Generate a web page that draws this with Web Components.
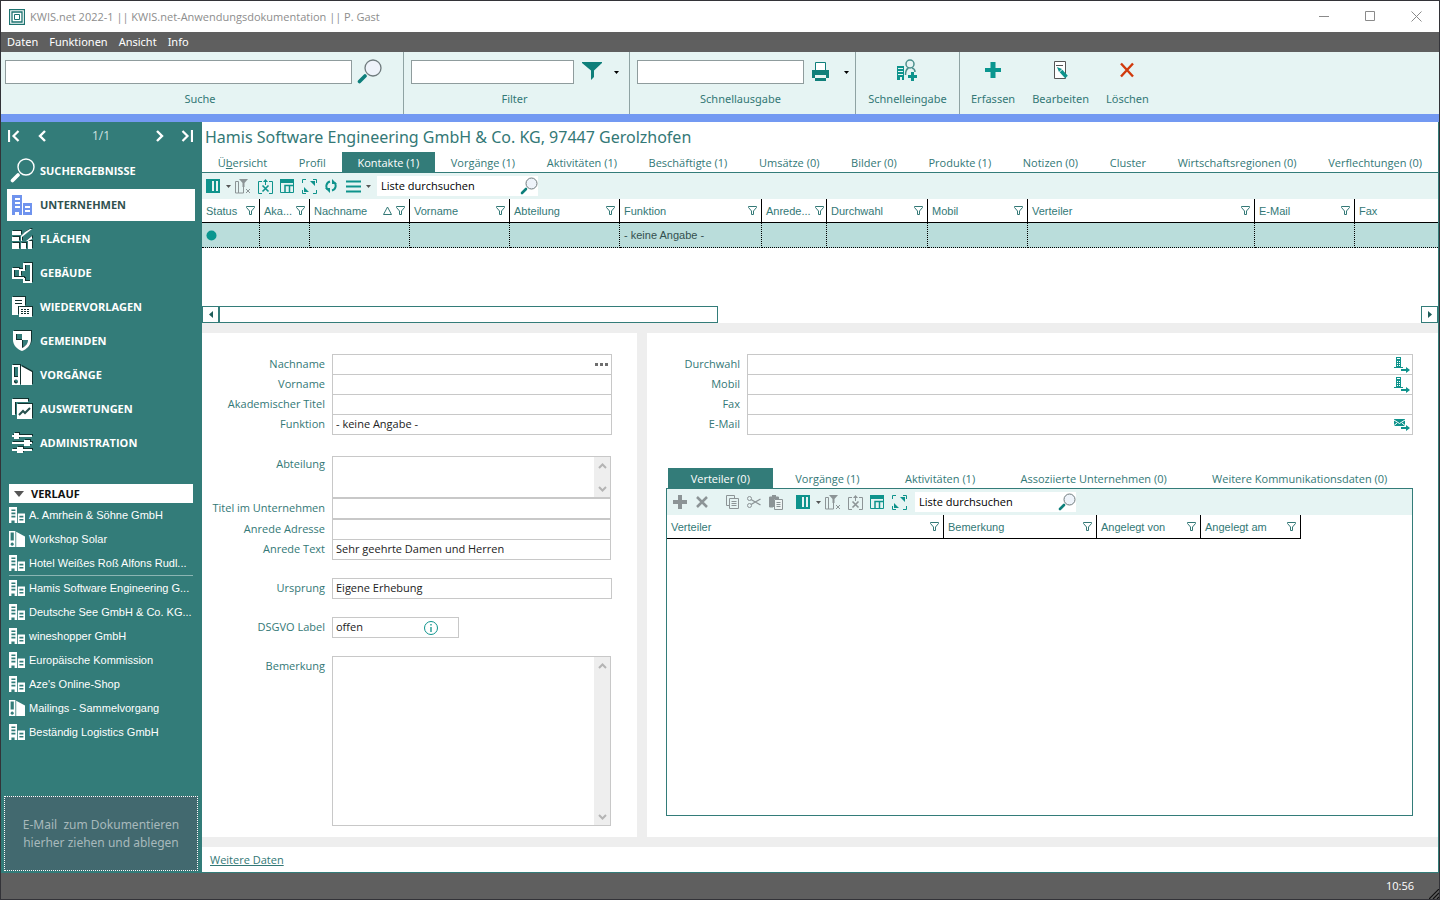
<!DOCTYPE html>
<html lang="de">
<head>
<meta charset="utf-8">
<title>KWIS.net 2022-1</title>
<style>
  html { --teal: #337c79; --ink: #337876; --icon: #0e938c; --mint: #e6f4f3; --grey: #5f5f5f; --line: #c8c8c8; --ui: "Open Sans", "Noto Sans", sans-serif; --wide: "Noto Sans", "Open Sans", sans-serif; --list: "Liberation Sans", Arial, sans-serif; }
  body { margin: 0; font: 11px/16px var(--ui); color: var(--ink); }
</style>
</head>
<body>
<kw-app></kw-app>
<script>
const BASE = `
  *, ::before, ::after { box-sizing: border-box; }
  button { font: inherit; color: inherit; background: none; border: 0; padding: 0; margin: 0; }
  input, textarea { font: inherit; color: #222; margin: 0; border: 0; outline: 0; background: none; min-width: 0; }
  a { color: inherit; text-decoration: none; }
  ul { list-style: none; margin: 0; padding: 0; }
`;
function define(name, css, html) {
  customElements.define(name, class extends HTMLElement {
    constructor() { super(); this.attachShadow({ mode: 'open' }); }
    connectedCallback() {
      const t = document.createElement('template');
      t.innerHTML = `<style>${BASE}${css}</style>` + (typeof html === 'function' ? html(this) : html);
      this.shadowRoot.replaceChildren(t.content.cloneNode(true));
    }
  });
}

/* Icon set: [width, height, markup] */
const BUILDING = '<path fill-rule="evenodd" fill="currentColor" d="M0 0h10v20H7v-3H3v3H0zM3 3v2h5V3zM3 7v2h5V7zM3 11v2h5v-2zM11 8h9v12h-9zM13 11v2h5v-2zM13 15v2h5v-2z"/>';
const BINDER = '<path fill-rule="evenodd" fill="currentColor" d="M0 0h8v20H0zM2 2v10h4V2zM4 14.500a2 2 0 1 0 .01 0zM9 1l11 6v13H9z"/>';
const ICONS = {
  logo: [16, 16, '<g fill="none" stroke="#1d7370"><path d="M.5 .5h15v15H.5zM3 3h10v10H3z" stroke-width="1.300"/><path d="M5.500 5.500h5v5h-5z"/></g>'],
  min: [11, 11, '<path d="M0 5.500h10" stroke="#8a8a8a"/>'],
  max: [11, 11, '<path d="M.5 .5h9v9h-9z" stroke="#8a8a8a" fill="none"/>'],
  close: [11, 11, '<path d="M.5 .5l10 10M10.500 .5l-10 10" stroke="#8a8a8a" fill="none"/>'],
  lens: [26, 26, '<circle cx="16" cy="9" r="8" fill="#eef3fa" stroke="#6f7b7d" stroke-width="1.300"/><path d="M9 16l-1.500 1.500" stroke="#6f7b7d"/><path d="M8 17l-5.500 5.500" stroke="#0d7f7b" stroke-width="3.600" stroke-linecap="round"/>'],
  lensSmall: [18, 18, '<circle cx="11.500" cy="6.500" r="5.500" fill="#eef3fa" stroke="#6f7b7d"/><path d="M6 12l-4 4" stroke="#0d7f7b" stroke-width="2.600" stroke-linecap="round"/>'],
  lensWhite: [26, 26, '<circle cx="16" cy="9" r="8" fill="none" stroke="#fff" stroke-width="1.400"/><path d="M8 17l-5.500 5.500" stroke="#fff" stroke-width="3.600" stroke-linecap="round"/>'],
  funnel: [20, 20, '<path d="M0 0h20v1l-8 7.500V15l-3 3V8.500L0 1z" fill="#0f7f7a"/>'],
  printer: [18, 20, '<path d="M3.500 .5h10v8h-10z" fill="#fff" stroke="#0f7f7a"/><path d="M0 8h17v8h-3v-3H3v3H0z" fill="#0f7f7a"/><path d="M3 16h11v3H3z" fill="#0f7f7a"/>'],
  caret: [5, 3, '<path d="M0 0h5L2.500 3z" fill="currentColor"/>'],
  quick: [22, 22, '<path fill-rule="evenodd" fill="#0e938c" d="M1 7h7v14H6v-3H4v3H1zM2 9v1h5V9zM2 12v1h5v-1zM2 15v1h5v-1z"/><circle cx="14" cy="5" r="4" fill="none" stroke="#4a8f8c" stroke-width="1.500"/><path d="M9.500 16c0-4 1-6 3-7M19 13c0-2-1-3.500-3-4" fill="none" stroke="#4a8f8c" stroke-width="1.500"/><path d="M15 13h3v3h3v3h-3v3h-3v-3h-3v-3h3z" fill="#0e938c"/>'],
  plus: [16, 18, '<path d="M5.500 1h5v6H16v4h-5.500v6h-5v-6H0V7h5.500z" fill="#0a968f"/>'],
  edit: [16, 20, '<path d="M1.500 1.500h11v17h-11z" fill="#fff" stroke="#555"/><path d="M3 5.500h7" stroke="#555"/><path d="M4 7l5 2-3 3z" fill="#0e938c"/><path d="M8 11l5.500 6" stroke="#0e938c" stroke-width="3.600"/>'],
  del: [16, 16, '<path d="M2 1.500l12 13M14 1.500l-12 13" stroke="#d13a0c" stroke-width="2.400"/>'],
  first: [12, 12, '<path d="M1 0v12M10.500 1L5.500 6l5 5" fill="none" stroke="#fff" stroke-width="2.200"/>'],
  prev: [12, 12, '<path d="M8 1L3 6l5 5" fill="none" stroke="#fff" stroke-width="2.400"/>'],
  next: [12, 12, '<path d="M4 1l5 5-5 5" fill="none" stroke="#fff" stroke-width="2.400"/>'],
  last: [12, 12, '<path d="M11 0v12M1.500 1l5 5-5 5" fill="none" stroke="#fff" stroke-width="2.200"/>'],
  company: [20, 20, BUILDING],
  area: [20, 20, '<g fill="currentColor"><path d="M0 2h9v4H0zM0 8h7v4H0zM0 14h7v6H0zM9 14h5v6H9zM16 12h4v8h-4zM13 3l5-3h2L10 8v4h4l6-5v3l-4 2H9V7z"/></g>'],
  plan: [20, 20, '<path d="M7 6H1v9h11M12 15v4h7V1h-7v6H8v6" fill="none" stroke="currentColor" stroke-width="2"/>'],
  calendar: [20, 20, '<path fill-rule="evenodd" fill="currentColor" d="M0 0h13v9H6v9H0zM3 3v1h7V3zM3 6v1h7V6z"/><path fill-rule="evenodd" fill="currentColor" d="M7 10h13v10H7zM9 12v1h2v-1zM12 12v1h2v-1zM15 12v1h2v-1zM9 14v1h2v-1zM12 14v1h2v-1zM15 14v1h2v-1zM9 16v1h2v-1zM12 16v1h2v-1zM15 16v1h2v-1z"/>'],
  shield: [20, 20, '<path fill-rule="evenodd" fill="currentColor" d="M1 0h18v9c0 5-4 9-9 11C5 18 1 14 1 9zM4 3v6h6V3zM10 9v8c3-1.500 6-4 6-8z"/>'],
  binder: [20, 20, BINDER],
  chart: [20, 20, '<path d="M0 0h16v3H3v13H0z" fill="currentColor"/><path fill-rule="evenodd" fill="currentColor" d="M5 5h15v15H5z"/><path d="M7 16l4-4 2 2 5-5" fill="none" stroke="#26504e" stroke-width="2"/>'],
  sliders: [20, 20, '<path d="M0 3h20M0 10h20M0 17h20" stroke="currentColor" stroke-width="2"/><path d="M2 0h5v6H2zM12 7h6v6h-6zM5 14h6v6H5z" fill="currentColor"/>'],
  columns: [14, 14, '<path d="M0 0h14v14H0z" fill="currentColor"/><path d="M6 2h2v10H6zM10 2h2v10h-2z" fill="#e6f4f3"/>'],
  colFilter: [16, 15, '<path d="M.5 14V2.500h3V14zM3.500 14h5V8" fill="none" stroke="#8c9496"/><path d="M4 0h9L9.500 4v4h-2V4z" fill="#8c9496"/><path d="M11 10l4 4M15 10l-4 4" stroke="#8c9496"/>'],
  excel: [15, 15, '<path d="M4 2.500H.5v12H4M11 2.500h3.500v12H11" fill="none" stroke="currentColor"/><path d="M4.500 6.500l6 6M10.500 6.500l-6 6" stroke="currentColor" stroke-width="1.600"/><path d="M7.500 6V2" stroke="currentColor"/><path d="M5 3l2.500-3L10 3z" fill="currentColor"/>'],
  layout: [14, 14, '<path d="M.5 .5h13v13H.5z" fill="none" stroke="currentColor"/><path d="M0 0h14v4H0z" fill="currentColor"/><path d="M5 14V6.500h9M9.500 7v7" fill="none" stroke="currentColor" stroke-width="1.500"/>'],
  expand: [15, 15, '<path d="M.5 4V.5H4M11 .5h3.500V4M.5 11v3.500H4M11 14.500h3.500V11" fill="none" stroke="currentColor"/><path d="M8 2h5v5zM2 8v5h5z" fill="currentColor"/>'],
  refresh: [12, 14, '<path d="M5 2.500C1 3.500 .5 8 2.500 10.500M7 11.500c4-1 4.500-5.500 2.500-8" fill="none" stroke="currentColor" stroke-width="2"/><path d="M0 9l5 0v5zM12 5H7V0z" fill="currentColor"/>'],
  list: [15, 13, '<path d="M0 1.500h15M0 6.500h15M0 11.500h15" stroke="currentColor" stroke-width="2"/>'],
  plusGrey: [14, 14, '<path d="M5 0h4v5h5v4H9v5H5V9H0V5h5z" fill="#8c9496"/>'],
  crossGrey: [12, 12, '<path d="M1 1l10 10M11 1L1 11" stroke="#8c9496" stroke-width="2.500"/>'],
  copy: [13, 14, '<path d="M3 10.500H.5V.5h8V3" fill="none" stroke="#8c9496"/><path d="M3.500 3.500h9v10h-9zM5.500 6.500h5M5.500 8.500h5M5.500 10.500h5" fill="none" stroke="#8c9496"/>'],
  cut: [14, 12, '<circle cx="2.500" cy="2.500" r="2" fill="none" stroke="#8c9496"/><circle cx="2.500" cy="9.500" r="2" fill="none" stroke="#8c9496"/><path d="M4 3.500l9.500 5.500M4 8.500L13.500 3" stroke="#8c9496" stroke-width="1.400"/>'],
  paste: [14, 15, '<path d="M4 12H.5V2h9v2" fill="none" stroke="#8c9496"/><path d="M1 2h8v2H5v8H1zM3 0h4v2H3z" fill="#8c9496"/><path d="M5.500 4.500h8v10h-8zM7.500 7.500h4M7.500 9.500h4M7.500 11.500h4" fill="#eef5f4" stroke="#8c9496"/>'],
  filterOutline: [9, 9, '<path d="M.5 .5h8v1L5.500 5v3.500h-2V5l-3-3.500z" fill="none" stroke="#337876"/>'],
  sort: [9, 9, '<path d="M4.500 1L8.500 8.500h-8z" fill="none" stroke="#337876"/>'],
  dot: [11, 11, '<circle cx="5.500" cy="5.500" r="5" fill="#0a968f"/>'],
  left: [4, 7, '<path d="M4 0v7L0 3.500z" fill="currentColor"/>'],
  right: [4, 7, '<path d="M0 0v7l4-3.500z" fill="currentColor"/>'],
  up: [9, 6, '<path d="M1 5l3.500-3.500L8 5" fill="none" stroke="#b4b4b4" stroke-width="2"/>'],
  down: [9, 6, '<path d="M1 1l3.500 3.500L8 1" fill="none" stroke="#b4b4b4" stroke-width="2"/>'],
  dots: [14, 3, '<path d="M0 0h3v3H0zM5 0h3v3H5zM10 0h3v3h-3z" fill="#6e6e6e"/>'],
  info: [14, 14, '<circle cx="7" cy="7" r="6.500" fill="none" stroke="#0e938c"/><path d="M7 3v1.500M7 6v5" stroke="#0e938c" stroke-width="1.300"/>'],
  phone: [16, 16, '<path fill-rule="evenodd" fill="#0e938c" d="M2 0h5v10h2v1H0v-1h2zM3 1v1h3V1zM3 4v1h1V4zM5 4v1h1V4zM3 6v1h1V6zM5 6v1h1V6zM3 8v1h1V8zM5 8v1h1V8z"/><path d="M7 12h5v-2l4 3-4 3v-2H7z" fill="#0e938c"/>'],
  mail: [16, 12, '<path d="M0 0h11v7H0z" fill="#0e938c"/><path d="M0 1l5.500 3.500L11 1M0 6.500l3-2.500M11 6.500L8 4" stroke="#fff" fill="none"/><path d="M7 8h5V6l4 3-4 3v-2H7z" fill="#0e938c"/>'],
  triangle: [10, 6, '<path d="M0 0h10L5 6z" fill="#555"/>'],
  grip: [10, 10, '<path d="M0 10L10 0M4 10l6-6M8 10l2-2" stroke="#111" stroke-width="1.200"/>']
};
define('kw-icon', `:host { display: inline-flex; flex: none; } svg { display: block; }`, el => {
  const [w, h, body] = ICONS[el.getAttribute('name')];
  const size = Number(el.getAttribute('size')) || w;
  return `<svg width="${size}" height="${Math.round(h * size / w)}" viewBox="0 0 ${w} ${h}" aria-hidden="true">${body}</svg>`;
});

define('kw-titlebar', `
  :host { display: flex; align-items: center; height: 31px; background: #fff; color: #8d8d8d; font-size: 11px; padding: 0 17px 0 8px; gap: 5px; }
  span { flex: 1; } .win { display: flex; gap: 35px; } button { display: flex; }`,
  `<kw-icon name="logo"></kw-icon><span>KWIS.net 2022-1 || KWIS.net-Anwendungsdokumentation || P. Gast</span>
   <div class="win"><button aria-label="Minimieren"><kw-icon name="min"></kw-icon></button><button aria-label="Maximieren"><kw-icon name="max"></kw-icon></button><button aria-label="Schließen"><kw-icon name="close"></kw-icon></button></div>`);

define('kw-menubar', `
  :host { display: flex; align-items: center; gap: 11px; height: 20px; padding: 0 6px; background: var(--grey); color: #fff; font-family: var(--wide); }`,
  `<button>Daten</button><button>Funktionen</button><button>Ansicht</button><button>Info</button>`);

define('kw-ribbon-group', `
  :host { display: flex; flex-direction: column; height: 100%; border-right: 1px solid #8fa3a3; padding-top: 7px; min-width: 0; }
  .row { display: flex; gap: 8px; align-items: center; height: 26px; padding: 0 var(--end, 0) 0 7px; }
  :host([main]) .row { gap: 5px; padding: 0 20px 0 4px; }
  input { flex: 1; height: 24px; border: 1px solid #8f9c9d; background: #fff; padding: 0 4px; }
  label { display: block; text-align: center; margin-top: 6px; padding-right: 4px; }`,
  el => `<div class="row"><input id="f" type="text"><slot></slot></div><label for="f">${el.getAttribute('label')}</label>`);

define('kw-ribbon-button', `
  :host { display: block; }
  button { display: flex; flex-direction: column; align-items: center; gap: 6px; padding-top: 7px; }
  .ic { height: 26px; display: flex; align-items: center; padding-bottom: 4px; }`,
  el => `<button><span class="ic"><kw-icon name="${el.getAttribute('icon')}"></kw-icon></span>${el.getAttribute('label')}</button>`);

define('kw-ribbon', `
  :host { display: grid; grid-template-columns: 403px 226px 226px 104px 1fr; height: 70px; background: var(--mint); border-bottom: 8px solid #7399f2; font-family: var(--wide); }
  .cell { display: flex; justify-content: center; border-right: 1px solid #8fa3a3; } .cmds { display: flex; gap: 17px; padding-left: 11px; }
  .drop { display: flex; color: #000; padding-left: 4px; } .print .drop { padding-left: 6px; } .btn { display: flex; }
  .filter { --end: 10px; } .print { --end: 6px; }`,
  `<kw-ribbon-group main label="Suche"><button class="btn" aria-label="Suchen"><kw-icon name="lens"></kw-icon></button></kw-ribbon-group>
   <kw-ribbon-group class="filter" label="Filter"><button class="btn" aria-label="Filtern"><kw-icon name="funnel"></kw-icon></button><button class="drop" aria-label="Filter wählen"><kw-icon name="caret"></kw-icon></button></kw-ribbon-group>
   <kw-ribbon-group class="print" label="Schnellausgabe"><button class="btn" aria-label="Drucken"><kw-icon name="printer"></kw-icon></button><button class="drop" aria-label="Ausgabe wählen"><kw-icon name="caret"></kw-icon></button></kw-ribbon-group>
   <div class="cell"><kw-ribbon-button icon="quick" label="Schnelleingabe"></kw-ribbon-button></div>
   <div class="cmds"><kw-ribbon-button icon="plus" label="Erfassen"></kw-ribbon-button><kw-ribbon-button icon="edit" label="Bearbeiten"></kw-ribbon-button><kw-ribbon-button icon="del" label="Löschen"></kw-ribbon-button></div>`);

const NAV = [['lensWhite', 'SUCHERGEBNISSE'], ['company', 'UNTERNEHMEN'], ['area', 'FLÄCHEN'], ['plan', 'GEBÄUDE'], ['calendar', 'WIEDERVORLAGEN'], ['shield', 'GEMEINDEN'], ['binder', 'VORGÄNGE'], ['chart', 'AUSWERTUNGEN'], ['sliders', 'ADMINISTRATION']];
const HISTORY = [['company', 'A. Amrhein & Söhne GmbH'], ['binder', 'Workshop Solar'], ['company', 'Hotel Weißes Roß Alfons Rudl...'], ['company', 'Hamis Software Engineering G...'], ['company', 'Deutsche See GmbH & Co. KG...'], ['company', 'wineshopper GmbH'], ['company', 'Europäische Kommission'], ["company", "Aze's Online-Shop"], ['binder', 'Mailings - Sammelvorgang'], ['company', 'Beständig Logistics GmbH']];
define('kw-sidebar', `
  :host { display: flex; flex-direction: column; background: var(--teal); color: #fff; padding: 2px 3px; }
  .pager { display: flex; align-items: center; height: 24px; padding: 0 5px 0 4px; font-size: 12px; }
  .pager button { display: flex; } .pager span { flex: 1; text-align: center; color: #cfe2e1; } .pager .b { margin-left: 17px; } .pager .c { margin-right: 16px; }
  nav { display: flex; flex-direction: column; gap: 2px; padding: 7px 3px 0; }
  nav a { display: flex; align-items: center; height: 32px; font-weight: 700; font-size: 11px; }
  nav .ic { width: 33px; padding-left: 5px; display: flex; filter: drop-shadow(1px -1px 0 #12302e); }
  nav a:first-child .ic { padding-left: 3px; filter: none; }
  nav a.on { background: #fff; color: #31524f; } nav a.on .ic { color: #6f93ee; filter: none; }
  section { margin-top: 25px; padding: 0 5px; }
  .head { display: flex; align-items: center; gap: 7px; width: 100%; height: 19px; padding: 0 5px; background: #fff; color: #111; font-weight: 700; font-size: 11px; }
  li a { display: flex; align-items: center; gap: 4px; height: 24px; font: 11px/16px var(--list); white-space: nowrap; }
  li:nth-child(3) { border-bottom: 1px solid #8bb5b3; }
  .drop { margin-top: auto; display: grid; place-items: center; height: 75px; border: 1px dotted #fff; background: #42696f; color: #a8b9bc; font: 12px/18px var(--wide); text-align: center; }`,
  `<div class="pager"><button aria-label="Erster"><kw-icon name="first"></kw-icon></button><button class="b" aria-label="Zurück"><kw-icon name="prev"></kw-icon></button><span>1/1</span><button class="c" aria-label="Weiter"><kw-icon name="next"></kw-icon></button><button aria-label="Letzter"><kw-icon name="last"></kw-icon></button></div>
   <nav>${NAV.map(([i, t], n) => `<a href="#" class="${n === 1 ? 'on' : ''}"><span class="ic"><kw-icon name="${i}"></kw-icon></span>${t}</a>`).join('')}</nav>
   <section><button class="head"><kw-icon name="triangle"></kw-icon>VERLAUF</button>
   <ul>${HISTORY.map(([i, t]) => `<li><a href="#"><kw-icon name="${i}" size="16"></kw-icon>${t.replace('&', '&amp;')}</a></li>`).join('')}</ul></section>
   <div class="drop"><span>E-Mail &nbsp;zum Dokumentieren<br>hierher ziehen und ablegen</span></div>`);

define('kw-tabs', `
  :host { display: flex; height: 20px; color: var(--ink); font-size: 11px; }
  button { flex: 1 1 auto; height: 20px; padding-top: 2px; white-space: nowrap; } button.on { background: var(--teal); color: #fff; }`,
  el => el.getAttribute('items').split('|').map((t, i) => `<button role="tab" class="${i == el.getAttribute('active') ? 'on' : ''}">${t.replace('Üb', 'Ü<u>b</u>')}</button>`).join(''));

define('kw-toolbar', `
  :host { display: flex; align-items: center; height: 26px; background: var(--mint); color: var(--icon); }
  .tool { width: 22px; height: 26px; display: flex; align-items: center; justify-content: center; }
  .tool.caret { width: 8px; color: #555; } .tool.space { margin-right: 8px; } .tool.gap { margin-right: 5px; } .tool.off { color: #8c9496; }
  .find { display: flex; align-items: center; width: 161px; height: 20px; margin-left: 5px; background: #fff; } .find input { flex: 1; padding: 0 4px; color: #000; } .find button { display: flex; }`,
  el => el.getAttribute('tools').split(' ').map(t => { const [n, ...c] = t.split('.'); return `<button class="tool ${n} ${c.join(' ')}" aria-label="${n}"><kw-icon name="${n}"></kw-icon></button>`; }).join('') +
    `<span class="find"><input type="text" aria-label="Liste durchsuchen" value="Liste durchsuchen"><button aria-label="Suchen"><kw-icon name="lensSmall"></kw-icon></button></span>`);

/* columns="Label:width:flags|..." ; a column without a width takes the remaining space */
define('kw-table', `
  :host { display: block; overflow: hidden; }
  table { border-collapse: separate; border-spacing: 0; table-layout: fixed; font: 11px/16px var(--list); color: var(--ink); }
  table.full { width: 100%; }
  th { height: 24px; padding: 0 4px; font-weight: 400; text-align: left; border-right: 1px solid #000; border-bottom: 1px solid #000; background: #fff; }
  .full th:last-child, .full td:last-child { border-right: 0; }
  th div { display: flex; align-items: center; gap: 4px; } th span { flex: 1; white-space: nowrap; }
  td { height: 25px; padding: 0 4px; background: #badddb; color: #34504f; border-right: 1px dotted #000; border-bottom: 1px dotted #000; white-space: nowrap; } td kw-icon { display: flex; }`,
  el => {
    const cols = el.getAttribute('columns').split('|').map(c => c.split(':'));
    const row = el.getAttribute('row');
    const fixed = cols.reduce((s, c) => s + Number(c[1] || 0), 0);
    const full = cols.some(c => !c[1]);
    return `<table class="${full ? 'full' : ''}" ${full ? '' : `style="width:${fixed}px"`}><colgroup>${cols.map(c => `<col ${c[1] ? `style="width:${c[1]}px"` : ''}>`).join('')}</colgroup>
      <thead><tr>${cols.map(c => `<th><div><span>${c[0]}</span>${c[2] === 's' ? '<kw-icon name="sort"></kw-icon>' : ''}${c[1] ? '<kw-icon name="filterOutline"></kw-icon>' : ''}</div></th>`).join('')}</tr></thead>
      ${row === null ? '' : `<tbody><tr>${cols.map((c, i) => `<td>${i === 0 ? '<kw-icon name="dot"></kw-icon>' : i == 5 ? row : ''}</td>`).join('')}</tr></tbody>`}</table>`;
  });

define('kw-hscroll', `
  :host { display: flex; height: 17px; background: #fff; }
  button { width: 17px; height: 17px; display: grid; place-items: center; border: 1px solid var(--teal); color: #1f5d5a; background: #fff; }
  .track { flex: 1; display: flex; } .thumb { width: 41.500%; height: 17px; border: 1px solid var(--teal); background: #fff; }`,
  `<button aria-label="Nach links"><kw-icon name="left"></kw-icon></button><div class="track"><div class="thumb"></div></div><button aria-label="Nach rechts"><kw-icon name="right"></kw-icon></button>`);

define('kw-field', `
  :host { display: flex; gap: 7px; }
  label { flex: none; width: var(--label, 123px); text-align: right; line-height: var(--label-line, 20px); white-space: nowrap; color: var(--ink); }
  .box { flex: 1; min-width: 0; display: flex; align-items: center; min-height: 21px; border: 1px solid var(--line); background: #fff; }
  input { flex: 1; padding: 0 3px 1px; line-height: 16px; } button { display: flex; margin-right: 2px; }
  :host([short]) .box { flex: none; width: 127px; } :host([short]) button { margin-right: 20px; }
  textarea { flex: 1; align-self: stretch; resize: none; overflow: hidden; height: auto; padding: 2px 3px; }
  .box.area { align-items: stretch; }
  .rail { width: 16px; display: flex; flex-direction: column; justify-content: space-between; align-items: center; background: #eee; padding: 6px 0 5px; } .rail button { margin: 0; }`,
  el => {
    const icon = el.getAttribute('icon');
    const body = el.hasAttribute('area')
      ? `<div class="box area"><textarea id="c" rows="1"></textarea><div class="rail"><button aria-label="Nach oben"><kw-icon name="up"></kw-icon></button><button aria-label="Nach unten"><kw-icon name="down"></kw-icon></button></div></div>`
      : `<div class="box"><input id="c" type="text" value="${el.getAttribute('value') || ''}">${icon ? `<button aria-label="Aktion"><kw-icon name="${icon}"></kw-icon></button>` : ''}</div>`;
    return `<label for="c">${el.getAttribute('label')}</label>${body}`;
  });

define('kw-contact-form', `
  :host { display: flex; flex-direction: column; gap: 18px; background: #fff; padding: 21px 25px 11px 0; }
  .group { display: flex; flex-direction: column; } .first { margin-bottom: 3px; }
  .first kw-field + kw-field, .lap { margin-top: -1px; } .abt { height: 42px; --label-line: 16px; }
  .second { padding-right: 1px; } .note { flex: 1; padding-right: 1px; min-height: 120px; }`,
  `<div class="group first"><kw-field label="Nachname" icon="dots"></kw-field><kw-field label="Vorname"></kw-field><kw-field label="Akademischer Titel"></kw-field><kw-field label="Funktion" value="- keine Angabe -"></kw-field></div>
   <div class="group second"><kw-field class="abt" label="Abteilung" area></kw-field><kw-field label="Titel im Unternehmen"></kw-field><kw-field label="Anrede Adresse"></kw-field><kw-field class="lap" label="Anrede Text" value="Sehr geehrte Damen und Herren"></kw-field></div>
   <kw-field label="Ursprung" value="Eigene Erhebung"></kw-field>
   <kw-field label="DSGVO Label" value="offen" icon="info" short></kw-field>
   <kw-field class="note" label="Bemerkung" area></kw-field>`);

define('kw-contact-details', `
  :host { display: flex; flex-direction: column; background: #fff; padding: 21px 25px 21px 19px; --label: 74px; }
  .group kw-field + kw-field { margin-top: -1px; }
  kw-tabs { margin: 33px 3px 0 2px; }
  kw-toolbar { padding-left: 2px; }
  .box { flex: 1; min-height: 200px; border: 1px solid var(--teal); }`,
  `<div class="group"><kw-field label="Durchwahl" icon="phone"></kw-field><kw-field label="Mobil" icon="phone"></kw-field><kw-field label="Fax"></kw-field><kw-field label="E-Mail" icon="mail"></kw-field></div>
   <kw-tabs active="0" items="Verteiler (0)|Vorgänge (1)|Aktivitäten (1)|Assoziierte Unternehmen (0)|Weitere Kommunikationsdaten (0)"></kw-tabs>
   <div class="box"><kw-toolbar tools="plusGrey crossGrey.space copy cut paste.gap columns caret colFilter excel.off layout expand"></kw-toolbar>
   <kw-table columns="Verteiler:277|Bemerkung:153|Angelegt von:104|Angelegt am:100"></kw-table></div>`);

define('kw-workspace', `
  :host { display: flex; flex-direction: column; background: #eee; border: 1px solid var(--teal); border-top: 0; min-width: 0; }
  h1 { margin: 0; height: 30px; padding-left: 3px; font: 400 16px/30px var(--wide); background: #fff; }
  .tabs { background: #fff; border-bottom: 1px solid var(--teal); }
  .grid { height: 107px; background: #fff; }
  .split { flex: 1; display: grid; grid-template-columns: 435px minmax(0, 1fr); gap: 10px; padding: 10px 0; }
  footer { height: 25px; padding: 5px 8px; background: #fff; } footer a { text-decoration: underline; }`,
  `<h1>Hamis Software Engineering GmbH &amp; Co. KG, 97447 Gerolzhofen</h1>
   <div class="tabs"><kw-tabs active="2" items="Übersicht|Profil|Kontakte (1)|Vorgänge (1)|Aktivitäten (1)|Beschäftigte (1)|Umsätze (0)|Bilder (0)|Produkte (1)|Notizen (0)|Cluster|Wirtschaftsregionen (0)|Verflechtungen (0)"></kw-tabs></div>
   <kw-toolbar tools="columns caret colFilter excel layout expand refresh list caret"></kw-toolbar>
   <div class="grid"><kw-table row="- keine Angabe -" columns="Status:58|Aka...:50|Nachname:100:s|Vorname:100|Abteilung:110|Funktion:142|Anrede...:65|Durchwahl:101|Mobil:100|Verteiler:227|E-Mail:100|Fax:"></kw-table></div>
   <kw-hscroll></kw-hscroll>
   <div class="split"><kw-contact-form></kw-contact-form><kw-contact-details></kw-contact-details></div>
   <footer><a href="#">Weitere Daten</a></footer>`);

define('kw-statusbar', `
  :host { display: flex; justify-content: flex-end; align-items: center; gap: 15px; height: 26px; background: var(--grey); color: #fff; font-size: 11px; }
  kw-icon { align-self: flex-end; }`,
  `<time>10:56</time><kw-icon name="grip"></kw-icon>`);

define('kw-app', `
  :host { display: flex; flex-direction: column; min-height: 100vh; border: 1px solid #333338; box-sizing: border-box; background: #fff; }
  main { flex: 1; display: grid; grid-template-columns: 200px minmax(0, 1fr); }`,
  `<kw-titlebar></kw-titlebar><kw-menubar></kw-menubar><kw-ribbon></kw-ribbon>
   <main><kw-sidebar></kw-sidebar><kw-workspace></kw-workspace></main><kw-statusbar></kw-statusbar>`);
</script>
</body>
</html>
